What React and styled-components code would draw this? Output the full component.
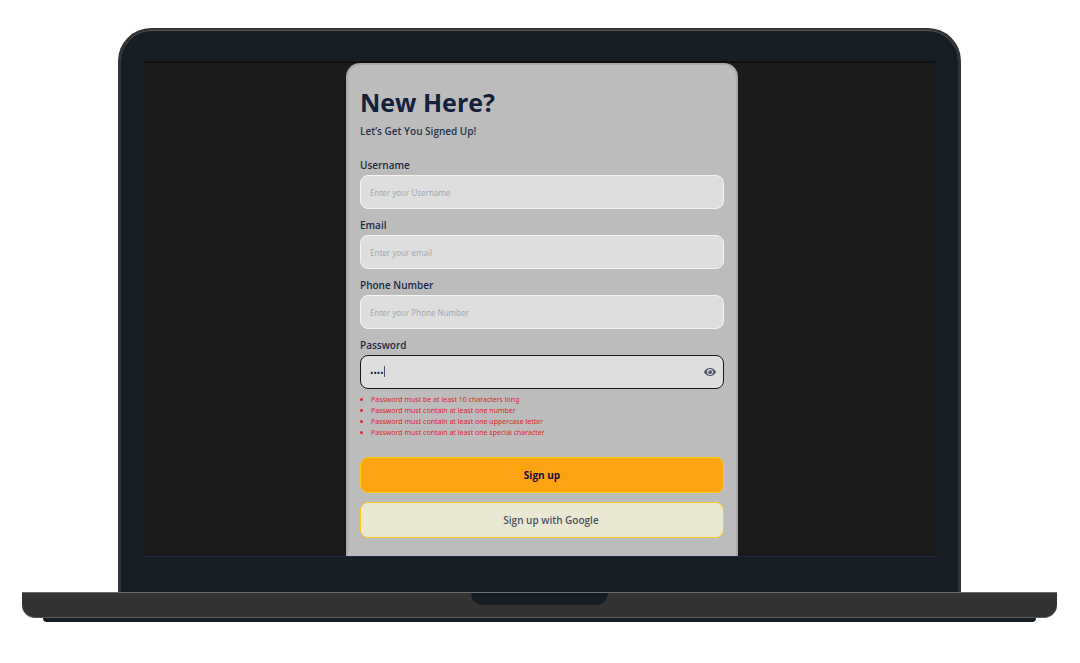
import React, { useState } from "react";
import styled, { createGlobalStyle } from "styled-components";

const GlobalStyle = createGlobalStyle`
  * { box-sizing: border-box; }
  body {
    margin: 0;
    background: #fff;
    color: #14213d;
    font-family: "Open Sans", "Noto Sans", sans-serif;
  }
`;

const Stage = styled.main`
  padding: 28px 23px 40px 22px;
`;

const Lid = styled.div`
  margin: 0 96px;
  padding: 31px 23px 35px;
  background: #161d23;
  border: solid #333;
  border-width: 2px 3px 0;
  border-radius: 33px 33px 0 0;
  box-shadow: inset 0 1px 0 #5a5d5f;
`;

const Screen = styled.div`
  display: flex;
  justify-content: center;
  padding-left: 5px;
  background: #1a1a1a;
  border-top: 2px solid #0d0f12;
  border-bottom: 1px solid #23264d;
`;

const Card = styled.form`
  width: 392px;
  padding: 19px 12px 18px;
  background: #bcbcbc;
  border: 2px solid #a9a9a9;
  border-bottom: 0;
  border-radius: 14px 14px 0 0;
`;

const Title = styled.h1`
  margin: 0;
  font-size: 25px;
  line-height: 36px;
  font-weight: 700;
`;

const Subtitle = styled.p`
  margin: 2px 0 17px;
  font-size: 10px;
  line-height: 18px;
  font-weight: 600;
  color: #26344a;
`;

const Field = styled.div`
  display: flex;
  flex-direction: column;
  margin-bottom: 8px;
`;

const Label = styled.label`
  font-size: 10px;
  line-height: 16px;
  font-weight: 600;
  margin-bottom: 2px;
  color: #1b2a45;
`;

const InputWrap = styled.div`
  position: relative;
  display: flex;
`;

const Input = styled.input`
  width: 100%;
  height: 34px;
  padding: 0 9px;
  font-family: "Noto Sans", sans-serif;
  font-size: ${(p) => (p.type === "password" ? 9 : 8)}px;
  color: #14213d;
  background: #dedede;
  border: 1px solid ${(p) => (p.$active ? "#18191b" : "#f4f4f4")};
  border-radius: 8px;
  outline: none;

  &::placeholder {
    color: #a2a8b3;
    opacity: 1;
  }
`;

const Caret = styled.span`
  position: absolute;
  left: 24px;
  top: 11px;
  width: 1px;
  height: 11px;
  background: #4a536a;
`;

const Reveal = styled.button`
  position: absolute;
  right: 8px;
  top: 10px;
  display: flex;
  padding: 0;
  border: 0;
  background: none;
  color: #4b5563;
  cursor: pointer;
`;

const Rules = styled.ul`
  margin: -3px 0 19px;
  padding: 0;
  list-style: none;
  color: #dc2626;
  font-family: "Noto Sans", sans-serif;
  font-size: 7px;
  line-height: 11px;
`;

const Rule = styled.li`
  display: flex;
  align-items: center;
  gap: 8px;

  &::before {
    content: "";
    width: 3px;
    height: 3px;
    border-radius: 50%;
    background: currentColor;
  }
`;

const Button = styled.button`
  display: block;
  width: 100%;
  height: 36px;
  margin-top: 9px;
  padding: 0 0 0 ${(p) => (p.$google ? 18 : 0)}px;
  font-family: inherit;
  font-size: 10px;
  font-weight: ${(p) => (p.$google ? 600 : 700)};
  color: ${(p) => (p.$google ? "#4a5362" : "#180d38")};
  background: ${(p) => (p.$google ? "#eae7d3" : "#fca311")};
  border: 1px solid #facc15;
  border-radius: 8px;
  cursor: pointer;
`;

const Base = styled.div`
  display: flex;
  justify-content: center;
  height: 26px;
  background: #333;
  border-top: 1px solid #6b6e6f;
  border-bottom: 1px solid #555a5e;
  border-radius: 0 0 13px 13px;
`;

const Notch = styled.div`
  width: 137px;
  height: 12px;
  background: #161d23;
  border-radius: 0 0 12px 12px;
`;

const Foot = styled.div`
  height: 4px;
  margin: 0 21px;
  background: #161d23;
  border-radius: 0 0 5px 5px;
`;

const EyeIcon = () => (
  <svg width="12" height="14" viewBox="0 0 576 512" fill="currentColor" aria-hidden="true">
    <path d="M572.52 241.4C518.29 135.59 410.93 64 288 64S57.68 135.64 3.48 241.41a32.35 32.35 0 0 0 0 29.19C57.71 376.41 165.07 448 288 448s230.32-71.64 284.52-177.41a32.35 32.35 0 0 0 0-29.19zM288 400a144 144 0 1 1 144-144 143.93 143.93 0 0 1-144 144zm0-240a95.31 95.31 0 0 0-25.31 3.79 47.85 47.85 0 0 1-66.9 66.9A95.78 95.78 0 1 0 288 160z" />
  </svg>
);

const fields = [
  { id: "username", label: "Username", type: "text", placeholder: "Enter your Username" },
  { id: "email", label: "Email", type: "email", placeholder: "Enter your email" },
  { id: "phone", label: "Phone Number", type: "tel", placeholder: "Enter your Phone Number" },
];

const rules = [
  "Password must be at least 10 characters long",
  "Password must contain at least one number",
  "Password must contain at least one uppercase letter",
  "Password must contain at least one special character",
];

export default function App() {
  const [visible, setVisible] = useState(false);
  return (
    <>
      <GlobalStyle />
      <Stage>
        <Lid>
          <Screen>
            <Card onSubmit={(e) => e.preventDefault()}>
              <Title>New Here?</Title>
              <Subtitle>Let’s Get You Signed Up!</Subtitle>
              {fields.map((f) => (
                <Field key={f.id}>
                  <Label htmlFor={f.id}>{f.label}</Label>
                  <Input id={f.id} type={f.type} placeholder={f.placeholder} />
                </Field>
              ))}
              <Field>
                <Label htmlFor="password">Password</Label>
                <InputWrap>
                  <Input id="password" type={visible ? "text" : "password"} defaultValue="abcd" $active />
                  <Caret />
                  <Reveal type="button" aria-label="Show password" onClick={() => setVisible(!visible)}>
                    <EyeIcon />
                  </Reveal>
                </InputWrap>
              </Field>
              <Rules>
                {rules.map((r) => (
                  <Rule key={r}>{r}</Rule>
                ))}
              </Rules>
              <Button type="submit">Sign up</Button>
              <Button type="button" $google>Sign up with Google</Button>
            </Card>
          </Screen>
        </Lid>
        <Base>
          <Notch />
        </Base>
        <Foot />
      </Stage>
    </>
  );
}
